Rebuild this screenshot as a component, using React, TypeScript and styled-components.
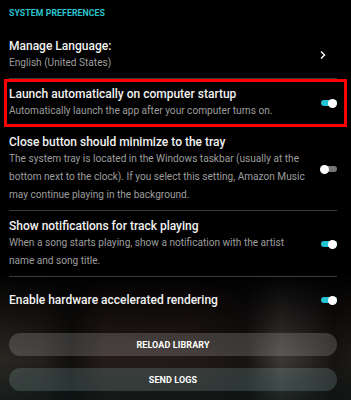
import styled, { createGlobalStyle } from "styled-components";

const GlobalStyle = createGlobalStyle`
  html, body {
    margin: 0;
    padding: 0;
    background: #000;
  }
  * {
    box-sizing: border-box;
  }
`

const Page = styled.div`
  width: 351px;
  height: 400px;
  overflow: hidden;
  padding: 6px 14px 0 9px;
  font-family: Roboto, "Liberation Sans", sans-serif;
  color: #fff;
  background:
    linear-gradient(to bottom, #000 0%, #000 68%, rgba(0, 0, 0, 0.55) 80%, rgba(0, 0, 0, 0.2) 90%, rgba(6, 18, 18, 0.65) 100%),
    linear-gradient(to right, #35302b 0%, #2b2724 12%, #151311 20%, #2e2320 30%, #2b201d 55%, #1c1816 70%, #4b4845 80%, #3a3634 86%, #1d1815 95%, #241f1b 100%);
`

const SectionTitle = styled.div`
  color: #27c3ce;
  font-size: 8.7px;
  font-weight: 700;
  line-height: 14px;
  letter-spacing: 0.1px;
  margin-bottom: 11px;
`

const Row = styled.div<{ $tall?: boolean }>`
  position: relative;
  display: flex;
  align-items: center;
  justify-content: space-between;
  gap: 16px;
  padding: ${(p) => (p.$tall ? "15px 0" : "7px 0 6px")};
  border-bottom: 1px solid ${(p) => (p.$tall ? "transparent" : "#3a3a3a")};
`

const RowText = styled.div`
  display: flex;
  flex-direction: column;
  min-width: 0;
`

const RowTitle = styled.div`
  font-size: 12px;
  font-weight: 500;
  line-height: 16px;
  color: #f2f2f2;
`

const RowDesc = styled.div`
  font-size: 10.1px;
  line-height: 18px;
  color: #9d9d9d;
  white-space: pre-line;
`

const Highlight = styled.div`
  position: absolute;
  top: 0;
  bottom: -1px;
  left: -5px;
  right: -10px;
  border: 3px solid #ff0000;
  pointer-events: none;
`

const Track = styled.div<{ $on: boolean }>`
  position: relative;
  flex: none;
  width: 16px;
  height: 6px;
  border-radius: 3px;
  background: ${(p) => (p.$on ? "#20c4d2" : "#767676")};
`

const Knob = styled.div<{ $on: boolean }>`
  position: absolute;
  top: -1.5px;
  left: ${(p) => (p.$on ? "7px" : "-1px")};
  width: 9px;
  height: 9px;
  border-radius: 50%;
  background: #fff;
`

const Chevron = styled.svg`
  flex: none;
  width: 8px;
  height: 10px;
  margin-right: 10px;
`

const Buttons = styled.div`
  display: flex;
  flex-direction: column;
  gap: 12px;
  margin-top: 9px;
`

const PillButton = styled.button<{ $tint: string }>`
  height: 23px;
  border: none;
  border-radius: 12px;
  background: ${(p) => p.$tint};
  color: #fff;
  font-family: Roboto, "Liberation Sans", sans-serif;
  font-size: 9px;
  font-weight: 700;
  letter-spacing: 0.1px;
  cursor: pointer;
`

const Toggle = ({ on }: { on: boolean }) => (
  <Track $on={on}>
    <Knob $on={on} />
  </Track>
)

interface Setting {
  title: string;
  desc?: string;
  on: boolean;
  highlight?: boolean;
}

const settings: Setting[] = [
  {
    title: "Launch automatically on computer startup",
    desc: "Automatically launch the app after your computer turns on.",
    on: true,
    highlight: true,
  },
  {
    title: "Close button should minimize to the tray",
    desc: "The system tray is located in the Windows taskbar (usually at the\nbottom next to the clock). If you select this setting, Amazon Music\nmay continue playing in the background.",
    on: false,
  },
  {
    title: "Show notifications for track playing",
    desc: "When a song starts playing, show a notification with the artist\nname and song title.",
    on: true,
  },
  {
    title: "Enable hardware accelerated rendering",
    on: true,
  },
]

export default function App() {
  return (
    <>
      <GlobalStyle />
      <Page>
        <SectionTitle>SYSTEM PREFERENCES</SectionTitle>
        <Row>
          <RowText>
            <RowTitle>Manage Language:</RowTitle>
            <RowDesc>English (United States)</RowDesc>
          </RowText>
          <Chevron viewBox="0 0 8 10">
            <path d="M2 1.5 L5.5 5 L2 8.5" fill="none" stroke="#fff" strokeWidth="1.4" />
          </Chevron>
        </Row>
        {settings.map((s) => (
          <Row key={s.title} $tall={!s.desc}>
            <RowText>
              <RowTitle>{s.title}</RowTitle>
              {s.desc && <RowDesc>{s.desc}</RowDesc>}
            </RowText>
            <Toggle on={s.on} />
            {s.highlight && <Highlight />}
          </Row>
        ))}
        <Buttons>
          <PillButton $tint="rgba(255, 255, 255, 0.17)">RELOAD LIBRARY</PillButton>
          <PillButton $tint="rgba(160, 200, 200, 0.2)">SEND LOGS</PillButton>
        </Buttons>
      </Page>
    </>
  )
}
